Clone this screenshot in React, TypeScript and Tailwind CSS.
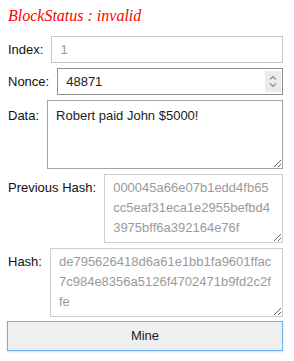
import React from "react";

const prevHash = "000045a66e07b1edd4fb65cc5eaf31eca1e2955befbd43975bff6a392164e76f";
const hash = "de795626418d6a61e1bb1fa9601ffac7c984e8356a5126f4702471b9fd2c2ffe";

// stand-in for the browser's number spinner, which only shows on hover
function Spinner() {
  return (
    <div className="absolute right-[2px] top-[3px] w-[16px] h-[21px] bg-[#ebebef] flex items-center justify-center">
      <svg width="10" height="15" viewBox="0 0 10 15" fill="none">
        <path d="M2 5.5 L5 2.5 L8 5.5" stroke="#8a8a8e" strokeWidth="1.1" />
        <path d="M2 9.5 L5 12.5 L8 9.5" stroke="#8a8a8e" strokeWidth="1.1" />
      </svg>
    </div>
  );
}

export default function App() {
  return (
    <div className="w-[294px] h-[361px] bg-white pl-[8px] pr-[11px] pt-[7px] font-['Liberation_Sans',Arial,sans-serif] text-[13px] text-[#111]">
      {/* status line */}
      <div className="font-['Liberation_Serif','Times_New_Roman',serif] italic text-[16px] leading-[18px] text-[#ff0000] mb-[11px]">
        BlockStatus : invalid
      </div>

      <div className="flex flex-col gap-[5px]">
        <div className="flex items-center gap-2">
          <label className="leading-[20px]">Index:</label>
          <input
            readOnly
            value="1"
            className="flex-1 min-w-0 h-[27px] border border-[#c6c6c6] px-[8px] text-[13px] text-[#9a9a9a] outline-none bg-white"
          />
        </div>

        <div className="flex items-center gap-2">
          <label className="leading-[20px]">Nonce:</label>
          <div className="relative flex-1 min-w-0">
            <input
              type="number"
              defaultValue={48871}
              className="w-full h-[27px] border border-[#8f8f8f] pl-[8px] pr-[20px] text-[13px] text-[#222] outline-none bg-white [appearance:textfield] [&::-webkit-inner-spin-button]:appearance-none [&::-webkit-outer-spin-button]:appearance-none"
            />
            <Spinner />
          </div>
        </div>

        <div className="flex items-start gap-2">
          <label className="leading-[20px] pt-[6px]">Data:</label>
          <textarea
            rows={3}
            defaultValue="Robert paid John $5000!"
            className="flex-1 min-w-0 h-[69px] border border-[#a3a3a3] px-[8px] py-[5px] leading-[20px] text-[13px] text-[#222] outline-none bg-white"
          />
        </div>

        <div className="flex items-start gap-2">
          <label className="leading-[20px] pt-[4px]">Previous Hash:</label>
          <textarea
            readOnly
            rows={3}
            value={prevHash}
            className="flex-1 min-w-0 h-[69px] border border-[#cfcfcf] px-[8px] py-[3px] leading-[20px] text-[13px] text-[#9a9a9a] outline-none bg-white break-all"
          />
        </div>

        <div className="flex items-start gap-2">
          <label className="leading-[20px] pt-[4px]">Hash:</label>
          <textarea
            readOnly
            rows={3}
            value={hash}
            className="flex-1 min-w-0 h-[69px] border border-[#cfcfcf] px-[8px] py-[3px] leading-[20px] text-[13px] text-[#9a9a9a] outline-none bg-white break-all"
          />
        </div>
      </div>

      <button className="mt-[4px] -ml-px w-[calc(100%+1px)] h-[30px] bg-[#efefef] border border-[#6fb0ea] text-[13px] text-[#222] shadow-[0_1px_2px_rgba(0,0,0,0.15)]">
        Mine
      </button>
    </div>
  );
}
